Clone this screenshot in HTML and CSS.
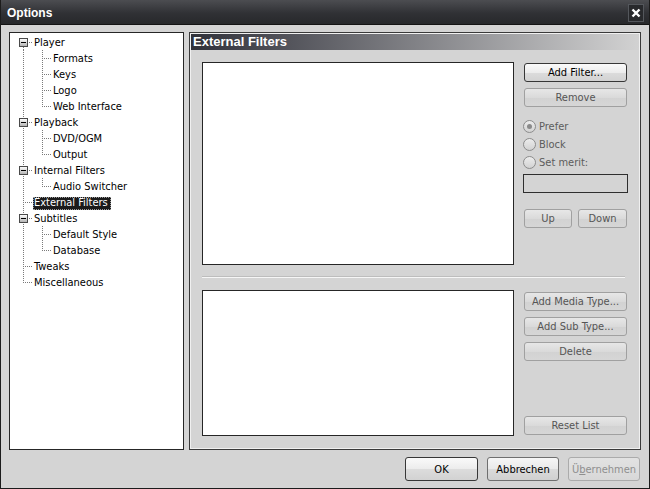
FILE: index.html
```html
<!DOCTYPE html>
<html>
<head>
<meta charset="utf-8">
<title>Options</title>
<link rel="stylesheet" href="styles.css">
</head>
<body>
<div class="window">
  <div class="titlebar">
    <span class="title">Options</span>
    <span class="close"><svg width="14" height="16" viewBox="0 0 14 16"><path d="M3.5 4.5 L10.5 11.5 M10.5 4.5 L3.5 11.5" stroke="#fff" stroke-width="2.4" fill="none"/></svg></span>
  </div>
  <div class="main">
    <div class="tree">
      <div class="row"><span class="g first"><span class="exp"></span></span><span class="label">Player</span></div>
      <div class="row"><span class="g pipe"></span><span class="g tee"></span><span class="label">Formats</span></div>
      <div class="row"><span class="g pipe"></span><span class="g tee"></span><span class="label">Keys</span></div>
      <div class="row"><span class="g pipe"></span><span class="g tee"></span><span class="label">Logo</span></div>
      <div class="row"><span class="g pipe"></span><span class="g end"></span><span class="label">Web Interface</span></div>
      <div class="row"><span class="g tee"><span class="exp"></span></span><span class="label">Playback</span></div>
      <div class="row"><span class="g pipe"></span><span class="g tee"></span><span class="label">DVD/OGM</span></div>
      <div class="row"><span class="g pipe"></span><span class="g end"></span><span class="label">Output</span></div>
      <div class="row"><span class="g tee"><span class="exp"></span></span><span class="label">Internal Filters</span></div>
      <div class="row"><span class="g pipe"></span><span class="g end"></span><span class="label">Audio Switcher</span></div>
      <div class="row"><span class="g tee"></span><span class="label selected">External Filters</span></div>
      <div class="row"><span class="g tee"><span class="exp"></span></span><span class="label">Subtitles</span></div>
      <div class="row"><span class="g pipe"></span><span class="g tee"></span><span class="label">Default Style</span></div>
      <div class="row"><span class="g pipe"></span><span class="g end"></span><span class="label">Database</span></div>
      <div class="row"><span class="g tee"></span><span class="label">Tweaks</span></div>
      <div class="row"><span class="g end"></span><span class="label">Miscellaneous</span></div>
    </div>
    <div class="panel">
      <div class="panel-head">External Filters</div>
      <div class="panel-body">
        <div class="section top">
          <div class="listbox"></div>
          <div class="side">
            <div class="btn default first-btn">Add Filter...</div>
            <div class="btn gap6">Remove</div>
            <div class="radios">
              <div class="radio on"><span class="dot"></span><span>Prefer</span></div>
              <div class="radio"><span class="dot"></span><span>Block</span></div>
              <div class="radio"><span class="dot"></span><span>Set merit:</span></div>
            </div>
            <div class="merit"></div>
            <div class="updown">
              <div class="btn up">Up</div>
              <div class="btn down">Down</div>
            </div>
          </div>
        </div>
        <div class="divider"></div>
        <div class="section bottom">
          <div class="listbox"></div>
          <div class="side">
            <div class="btn second-btn">Add Media Type...</div>
            <div class="btn gap6">Add Sub Type...</div>
            <div class="btn gap6">Delete</div>
            <div class="btn reset">Reset List</div>
          </div>
        </div>
      </div>
    </div>
  </div>
  <div class="footer">
    <div class="btn big default ok">OK</div>
    <div class="btn big normal">Abbrechen</div>
    <div class="btn big disabled">Ü<u>b</u>ernehmen</div>
  </div>
</div>
</body>
</html>
```
FILE: styles.css
```css
* { box-sizing: border-box; }
html, body { margin: 0; padding: 0; }
body {
  background: #d4d4d4;
  font-family: "DejaVu Sans Condensed", "Liberation Sans", Arial, sans-serif;
  font-size: 11px;
  color: #000;
}
.window {
  width: 650px;
  height: 489px;
  display: flex;
  flex-direction: column;
  background: #d4d4d4;
  border: 1px solid #1c1c1c;
  border-top: 0;
}
.titlebar {
  height: 25px;
  flex: none;
  display: flex;
  justify-content: space-between;
  align-items: flex-start;
  background: linear-gradient(#4c4d51, #303135 55%, #27282b);
  border-bottom: 1px solid #141414;
  padding: 0 5px 0 6px;
}
.title {
  font-family: "Liberation Sans", Arial, sans-serif;
  font-weight: bold;
  font-size: 12px;
  color: #fff;
  line-height: 22px;
  padding-top: 2px;
}
.close {
  width: 16px;
  height: 18px;
  margin-top: 4px;
  background: #28292c;
  border: 1px solid #54575c;
  display: flex;
  align-items: center;
  justify-content: center;
}
.close svg { display: block; }

.main {
  flex: none;
  display: flex;
  gap: 5px;
  padding: 7px 8px 0 8px;
}
.tree {
  width: 175px;
  height: 418px;
  background: #fff;
  border: 1px solid #262626;
  padding: 1px 0 0 4px;
}
.row {
  display: flex;
  height: 16px;
}
.g {
  position: relative;
  width: 19px;
  height: 16px;
  flex: none;
}
.g::before {
  content: "";
  position: absolute;
  left: 9px;
  width: 1px;
  background: repeating-linear-gradient(to bottom, #7a7a7a 0 1px, transparent 1px 2px);
}
.pipe::before, .tee::before { top: 0; bottom: 0; }
.end::before { top: 0; height: 9px; }
.first::before { top: 9px; bottom: 0; }
.tee::after, .end::after, .first::after {
  content: "";
  position: absolute;
  left: 10px;
  right: 0;
  top: 8px;
  height: 1px;
  background: repeating-linear-gradient(to right, transparent 0 1px, #7a7a7a 1px 2px);
}
.exp {
  position: absolute;
  left: 5px;
  top: 4px;
  width: 9px;
  height: 9px;
  border: 1px solid #4a4a4a;
  background: linear-gradient(#fdfdfd, #b4b4b4);
  z-index: 1;
}
.exp::after {
  content: "";
  position: absolute;
  left: 1px;
  top: 3px;
  width: 5px;
  height: 1px;
  background: #000;
}
.label {
  margin-top: 2px;
  height: 13px;
  line-height: 13px;
  padding: 0 1px;
  white-space: nowrap;
}
.label.selected {
  margin-top: 3px;
  line-height: 11px;
  background: #1b1b1b;
  color: #fff;
  outline: 1px dotted #9a9a9a;
  outline-offset: -1px;
  padding: 0 3px 0 1px;
}

.panel {
  width: 452px;
  height: 418px;
  border: 1px solid #3a3a3a;
  padding: 1px;
  box-shadow: inset 0 0 0 1px #f0f0f0;
  display: flex;
  flex-direction: column;
}
.panel-head {
  height: 16px;
  line-height: 16px;
  padding-left: 2px;
  font-family: "Liberation Sans", Arial, sans-serif;
  font-weight: bold;
  font-size: 13px;
  color: #fff;
  background: linear-gradient(to right, #30313a, #d2d2d2);
}
.panel-body {
  flex: 1;
  display: flex;
  flex-direction: column;
  padding: 12px 12px 12px 11px;
}
.section {
  display: flex;
  gap: 10px;
}
.section.top { height: 203px; flex: none; }
.section.bottom { flex: 1; }
.listbox {
  width: 312px;
  background: #fff;
  border: 1px solid #262626;
}
.side {
  width: 103px;
  display: flex;
  flex-direction: column;
}
.divider {
  height: 1px;
  margin: 12px 2px 12px 0;
  background: #f6f6f6;
  box-shadow: 0 -1px 0 #bdbdbd;
}

.btn {
  height: 19px;
  border: 1px solid #a0a0a0;
  border-radius: 3px;
  background: linear-gradient(#e7e7e7, #dadada 50%, #d2d2d2 51%, #d6d6d6);
  color: #555;
  display: flex;
  align-items: center;
  justify-content: center;
  white-space: nowrap;
  flex: none;
}
.btn.default {
  border-color: #373737;
  background: linear-gradient(#fafafa, #ececec 50%, #dcdcdc 51%, #d2d2d2);
  color: #000;
}
.btn.normal {
  border-color: #6f6f6f;
  background: linear-gradient(#f6f6f6, #e9e9e9 50%, #dadada 51%, #d0d0d0);
  color: #000;
}
.btn.disabled {
  border-color: #ababab;
  background: linear-gradient(#e2e2e2, #d8d8d8);
  color: #8f8f8f;
}
.first-btn { margin-top: 1px; }
.second-btn { margin-top: 2px; }
.gap6 { margin-top: 6px; }
.reset { margin-top: auto; margin-bottom: 1px; }

.radios { margin-top: 10px; }
.radio {
  height: 18px;
  display: flex;
  align-items: center;
  gap: 3px;
  color: #5c5c5c;
  margin-left: -1px;
}
.radio .dot {
  width: 13px;
  height: 13px;
  border-radius: 50%;
  border: 1px solid #8c8c8c;
  background: linear-gradient(#ececec, #d2d2d2);
  position: relative;
  flex: none;
}
.radio.on .dot::after {
  content: "";
  position: absolute;
  left: 3px;
  top: 3px;
  width: 5px;
  height: 5px;
  border-radius: 50%;
  background: #8a8a8a;
}
.merit {
  margin: 3px -1px 0 -1px;
  height: 19px;
  border: 1px solid #2e2e2e;
  background: #d4d4d4;
}
.updown {
  margin-top: 16px;
  display: flex;
  justify-content: space-between;
}
.up { width: 48px; }
.down { width: 49px; }

.footer {
  flex: 1;
  display: flex;
  justify-content: flex-end;
  align-items: flex-start;
  gap: 9px;
  padding: 7px 9px 0 0;
}
.btn.big { height: 24px; width: 72px; }
.btn.ok { width: 73px; }
.btn u { text-decoration: underline; }
```
